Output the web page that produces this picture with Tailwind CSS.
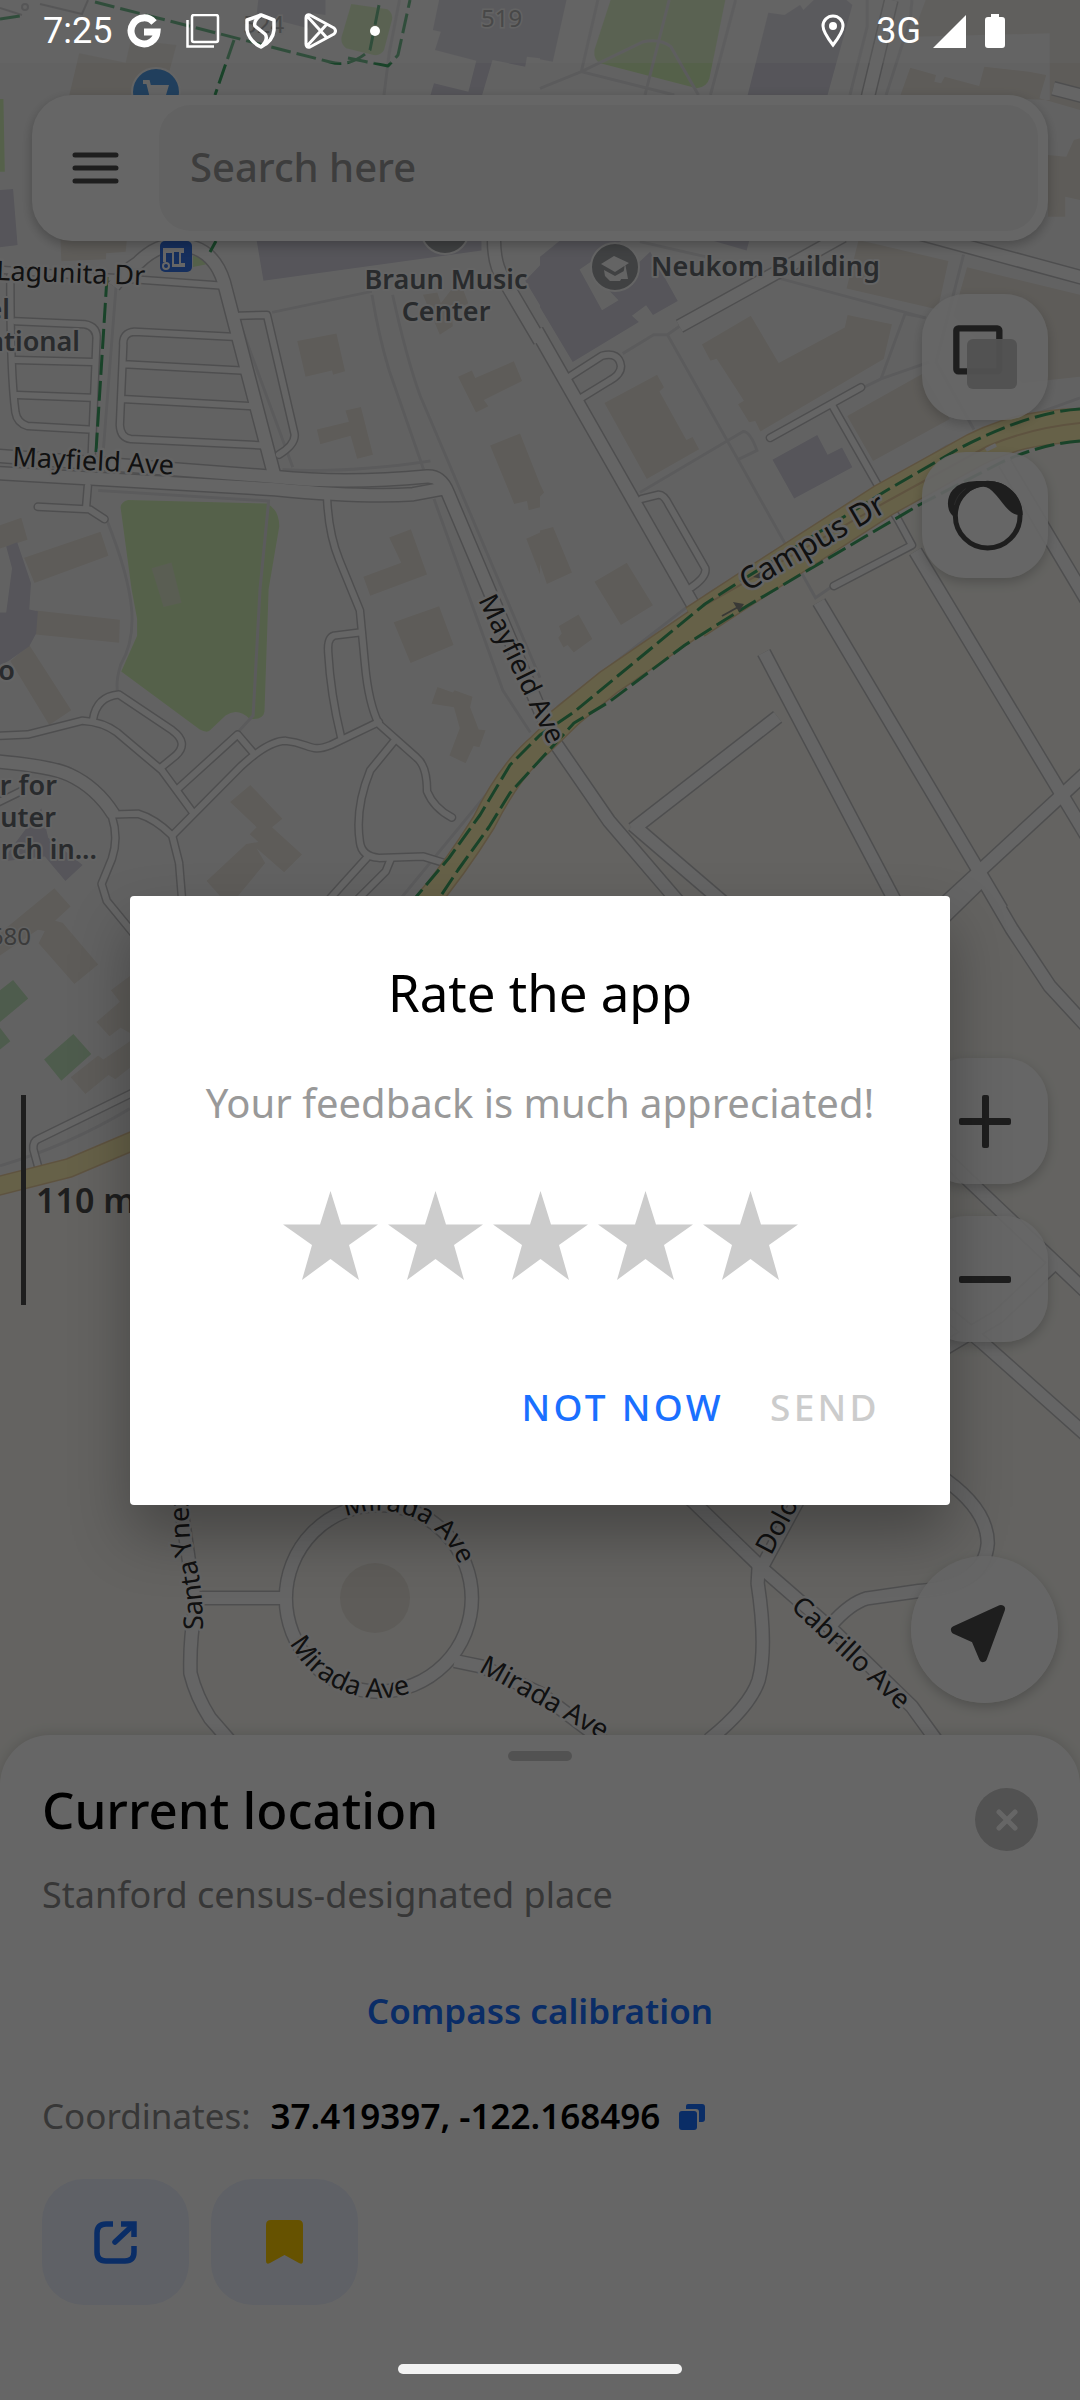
<!DOCTYPE html>
<html lang="en">
<head>
<meta charset="utf-8">
<meta name="viewport" content="width=device-width, initial-scale=1">
<title>Map</title>
<script src="https://cdn.jsdelivr.net/npm/@tailwindcss/browser@4"></script>
</head>
<body class="relative flex min-h-screen flex-col overflow-x-hidden bg-[#f9f8f2] font-['Noto_Sans',sans-serif] text-black">

<!-- Map -->
<svg class="absolute inset-0 h-full w-full [&_path]:[vector-effect:non-scaling-stroke]" viewBox="0 0 1080 2400" preserveAspectRatio="xMidYMin slice" aria-label="Map">
  <defs>
    <g id="wide" fill="none" stroke-linejoin="round">
      <g transform="translate(0 240) scale(.3444 .4209)">
        <path d="M330 110Q360 75 400 55Q460 5 530 12Q620 20 650 100L800 570"/>
        <path d="M-20 512L800 563Q1000 580 1240 562Q1280 560 1300 600L1600 1180"/>
        <path d="M-20 553L800 592Q1050 612 1200 604L1290 590"/>
        <path d="M1435 -20Q1430 50 1460 90L1568 240"/>
        <path d="M-20 1238Q150 1250 200 1270Q280 1300 330 1365"/>
      </g>
      <g transform="translate(540 240) scale(.3444 .4209)">
        <path d="M-10 215L450 875"/><path d="M405 205L880 -10"/>
        <path d="M810 860L1340 1590"/><path d="M650 980L1050 1600"/>
        <path d="M1090 740L1620 1460"/><path d="M1350 530L1620 900"/>
        <path d="M690 1133L270 1400"/><path d="M1600 1255L1130 1610"/>
        <path d="M40 1190L200 1380L420 1590"/><path d="M270 1390L570 1600"/>
      </g>
      <g transform="translate(540 0) scale(.3444 .3333)">
        <path d="M1020 0L950 300"/><path d="M1100 700L1600 840"/><path d="M1490 265L1620 300"/>
      </g>
      <g transform="translate(540 880) scale(.3444 .4082)">
        <path d="M1280 -10L1370 120L1480 260L1600 370"/><path d="M1290 -5L1150 110"/>
        <path d="M1150 660L1500 940L1600 1020"/><path d="M1500 935L1330 1070L1150 1160"/>
        <path d="M1150 1040L1280 1130L1600 1370"/>
      </g>
      <g transform="translate(0 1480) scale(.3444 .3333)">
        <path d="M1100 75A270 280 0 0 1 1100 635A270 280 0 0 1 1100 75Z"/>
        <path d="M570 354H830"/><path d="M520 40L568 380Q550 480 553 580Q570 650 610 715L665 780"/>
        <path d="M1320 543L1400 560L1568 640L1760 790"/>
      </g>
      <g transform="translate(540 1480) scale(.3444 .3333)">
        <path d="M1150 -20Q1300 80 1300 190Q1290 320 1100 333L950 355Q900 370 845 435"/>
        <path d="M420 40L650 270L850 450L1080 680L1150 780"/>
        <path d="M635 255L632 310Q660 500 635 600Q610 680 490 780"/><path d="M640 270L760 40"/>
      </g>
    </g>
    <g id="narrow" fill="none" stroke-linejoin="round" stroke-linecap="round">
      <g transform="translate(0 240) scale(.3444 .4209)">
        <path d="M30 85C30 300 40 380 45 410Q50 435 80 442L258 450"/>
        <path d="M45 193L245 200Q285 205 280 240L265 535"/>
        <path d="M45 285L270 290M50 368L265 375M-10 70L640 108"/>
        <path d="M675 230L390 218Q355 220 358 250L348 440Q350 470 380 473L765 488M360 295L700 310M355 378L735 395"/>
        <path d="M695 180L775 178L855 460Q860 485 810 510"/>
        <path d="M255 585L250 635M110 634L260 640L303 663"/>
        <path d="M950 618Q955 700 985 760L1045 880L1060 1010Q1070 1100 1100 1150L1210 1230Q1240 1250 1240 1310Q1260 1350 1312 1372"/>
        <path d="M1050 932L970 940Q950 945 953 980Q960 1080 990 1180"/>
        <path d="M-10 1178L80 1175L240 1142Q300 1145 340 1170L470 1260L560 1360"/>
        <path d="M270 1140Q280 1085 345 1080L500 1165Q550 1195 510 1225L465 1255"/>
        <path d="M515 1305L690 1175L735 1218"/>
        <path d="M500 1415L700 1250Q780 1190 830 1190C900 1195 900 1220 960 1200L1100 1145"/>
        <path d="M1145 1190L1075 1260Q1030 1350 1045 1430Q1050 1465 1100 1468L1230 1465L1290 1480"/>
        <path d="M930 1590L1065 1468M1010 1590L1120 1500L1135 1470"/>
        <path d="M330 1365L400 1363Q450 1375 500 1415L520 1480L530 1580"/>
        <path d="M325 1370Q345 1420 325 1470L295 1530L310 1570L390 1650"/>
        <path d="M-10 1338L60 1310"/>
      </g>
      <g transform="translate(540 240) scale(.3444 .4209)">
        <path d="M85 325L180 275Q230 265 235 300Q235 320 200 335L120 375"/>
        <path d="M295 615L345 605Q360 605 375 630L480 780Q485 800 440 825"/>
        <path d="M668 470L932 350M850 395L1000 610L1040 665L1080 725L853 822"/>
      </g>
      <g transform="translate(0 880) scale(.3444 .4082)"><path d="M400 515L110 635Q95 640 97 660L110 700"/></g>
    </g>
    <path id="mirada-top" d="M346 1517A87 87 0 0 1 466 1598"/>
    <path id="mirada-bottom" d="M290 1643A100 100 0 0 0 470 1640"/>
    <path id="santa" d="M203 1630C203 1590 198 1565 191 1545Q188 1530 188 1440"/>
  </defs>

  <path fill="#f6f6f6" d="M0 0H1080V425C990 425 930 480 884 501L609 690L540 750L475 838L430 897L130 1139L0 1186Z"/>

  <!-- Parks -->
  <g fill="#d5f3b9">
    <path transform="translate(0 240) scale(.3444 .4209)" d="M372 618L775 626Q810 640 811 680L780 830L768 1120Q765 1140 725 1138Q690 1110 655 1130L610 1165Q600 1172 580 1163L352 1025L398 940V900L382 830L350 635Q352 622 372 618Z"/>
    <path transform="translate(540 0) scale(.3444 .3333)" d="M205 0H538L492 235Q485 262 455 265L175 190Q155 180 158 150Z"/>
    <path transform="scale(.3444 .3333)" d="M1020 12L1125 28Q1142 40 1138 60L1115 150Q1105 168 1085 165L1005 145Q988 130 992 110ZM0 297H10L14 515H0Z"/>
    <path d="M193 256Q208 258 208 264L193 267Z"/>
  </g>
  <g fill="#c4e6c0" transform="translate(0 880) scale(.3444 .4082)">
    <path d="M38 245L82 290L0 348V270ZM0 362L30 395L0 415ZM213 377L265 426L178 492L128 440Z"/>
  </g>

  <!-- Buildings -->
  <g fill="#ebe6de">
    <path transform="scale(.3444 .3333)" d="M230 160L365 188L380 120L512 135L480 260V290H200ZM175 700H370L365 755L308 760V778L178 784Z"/>
    <path transform="translate(0 240) scale(.3444 .4209)" d="M863 240L977 222L1002 312L967 320L964 310L887 325ZM920 450L1013 432L1003 405L1048 397L1083 510L1037 520L1018 465L930 485ZM1228 130L1270 125L1280 150L1310 118L1345 118L1360 150L1310 170L1315 205L1277 225ZM1330 325L1370 310L1380 328L1492 288L1516 335L1405 380L1418 395L1382 410ZM1423 488L1510 460L1568 580V635L1535 642L1530 620L1493 627ZM1130 707L1193 687L1240 795L1075 845L1055 800L1165 767ZM1143 908L1275 870L1317 962L1192 1005ZM1270 1062L1315 1075L1320 1070L1372 1085L1365 1110L1390 1163L1410 1165L1392 1205L1375 1202L1352 1243L1305 1225L1335 1160L1318 1110L1253 1102ZM0 678L62 660L80 712L0 733ZM70 755L292 693L315 750L100 815ZM105 880L348 902L346 957L103 937ZM85 962L207 1117L143 1152L30 1000ZM727 1295L820 1375L790 1395L877 1460L825 1502L745 1445L770 1480L690 1560H640L600 1523L715 1435L750 1430L725 1412L745 1395L668 1335ZM1528 710L1568 695V795Z"/>
    <path transform="translate(540 240) scale(.3444 .4209)" d="M470 248L612 180L693 292L885 208L893 178L1022 200L998 283L640 455L625 430L607 433L575 390L592 382L513 282L495 287ZM187 387L340 320L360 350L347 360L425 475L443 468L462 497L310 568ZM892 418L1112 317L1190 425L967 525ZM925 0L1186 50L1155 165L890 115ZM1240 65L1568 130V325L1400 340L1200 180ZM0 690L38 682L93 790L20 817L0 770ZM158 812L252 767L328 868L235 915ZM55 917L112 890L152 948L98 980L80 962L68 968L53 945L63 935ZM0 580L12 600L0 610Z"/>
    <path transform="translate(540 0) scale(.3444 .3333)" d="M1120 0H1568V600L1525 590V650L1475 650L1475 465L1528 470L1550 420L1568 415V330L1450 295L1470 225L1420 215L1290 200L1275 258L1175 230L1165 250L1145 245L1150 225L1075 203L1045 290H1200L1480 300V100L1080 110Z"/>
    <path transform="translate(0 880) scale(.3444 .4082)" d="M158 20L205 65L160 100L182 105L285 207L216 255L112 155L130 125L110 122L0 185V130ZM377 235L322 270L348 298L280 348L318 383L350 362L377 375ZM377 395L300 440L285 430L205 483L248 524L315 478L335 488L377 460ZM600 0H720L670 38H645Z"/>
    <ellipse cx="375" cy="1598" rx="35" ry="35"/>
    <path fill="#e0eccf" transform="translate(0 240) scale(.3444 .4209)" d="M440 780L498 766L527 862L475 872Z"/>
  </g>
  <g fill="#d6d4e0">
    <path transform="translate(0 240) scale(.3444 .4209)" d="M745 0H1398V25L765 97ZM18 728L50 718L90 815L85 878L110 882L105 935L85 965L25 1000L0 1010V885H18L35 780ZM1568 60L1525 97L1568 155ZM10 1470L120 1350L140 1420L240 1485L190 1523L130 1465L25 1475ZM0 0H45L50 12L0 14Z"/>
    <path transform="translate(540 240) scale(.3444 .4209)" d="M0 40L60 0H240L115 70L180 167L228 143L200 120L320 28L400 145L328 178L308 155L267 180L287 195L95 290L0 160ZM675 522L805 463L835 510L877 493L907 540L738 614ZM495 0H608L600 25Z"/>
    <path transform="scale(.3444 .3333)" d="M750 0H945V45L910 40L895 85L745 45ZM1275 0H1568V175L1530 170L1525 200L1430 180L1400 285H1250L1260 250L1360 275L1383 182L1263 150L1280 95L1257 90ZM0 570L38 567L51 735L0 742Z"/>
    <path transform="translate(540 0) scale(.3444 .3333)" d="M0 0H77L37 185L0 178ZM663 38L710 45L755 15L765 30L795 0H890L907 15L835 285H603Z"/>
  </g>

  <!-- Footpaths -->
  <g fill="none" stroke="#e4e4e6" stroke-width="3">
    <path transform="translate(0 240) scale(.3444 .4209)" d="M337 110L300 500M790 172L1080 122M1080 130Q1100 230 1130 310L1230 545M1140 130Q1180 280 1220 370L1568 1040M700 205L850 540M820 545Q1000 555 1250 525M285 595L780 620L755 830L735 1130L690 1170M310 665C400 850 400 940 350 1010Q335 1050 342 1078M1260 615L1460 1070L1540 1170M1160 1568L1560 1170"/>
    <path transform="translate(540 240) scale(.3444 .4209)" d="M240 270L330 225H370L405 205M370 225L575 522L800 850L850 822M290 600L590 455Q610 455 630 500L575 522M690 90L1120 185L1060 175L990 330L940 350M990 330L1130 290M1230 35L1150 290L1260 450M480 845L700 735L1180 490L1568 375M50 1110L430 870"/>
    <path transform="translate(540 0) scale(.3444 .3333)" d="M375 0L305 285M0 265L120 215L300 125Q350 115 380 140L460 285M168 0L120 215L390 285M568 0L495 285M950 0L950 80L900 285M1080 0L1075 60L1005 285M290 725L480 770"/>
    <path transform="scale(.3444 .3333)" d="M1160 0L1130 160L1115 285"/>
    <path transform="translate(0 880) scale(.3444 .4082)" d="M0 700Q200 650 377 560"/>
  </g>
  <g fill="none" stroke="#c8c8ca" stroke-width="2"><path d="M0 8L22 15M40 4L82 14L88 0"/><circle cx="25" cy="7" r="3"/></g>

  <!-- Roads: casing, then surface -->
  <use href="#narrow" stroke="#c4c4c6" stroke-width="9"/>
  <use href="#wide" stroke="#c4c4c6" stroke-width="15"/>
  <use href="#narrow" stroke="#fdfdfd" stroke-width="6"/>
  <use href="#wide" stroke="#fdfdfd" stroke-width="12"/>

  <g fill="none" stroke-linejoin="round">
    <g stroke="#ecd0a0">
      <path stroke-width="35" d="M1090 425C1040 425 1000 434 960 458L884 500L747 588L695 622"/>
      <path stroke-width="28" d="M720 606L609 682L557 724"/>
      <path stroke-width="25" d="M580 706L540 745Q510 770 484 822Q454 870 424 905"/>
      <path stroke-width="20" d="M-10 1188L69 1168L135 1140"/>
    </g>
    <g stroke="#fff3b4">
      <path stroke-width="32" d="M1090 425C1040 425 1000 434 960 458L884 500L747 588L695 622"/>
      <path stroke-width="25" d="M720 606L609 682L557 724"/>
      <path stroke-width="22" d="M580 706L540 745Q510 770 484 822Q454 870 424 905"/>
      <path stroke-width="17" d="M-10 1188L69 1168L135 1140"/>
    </g>
    <path stroke="#ecd0a0" stroke-width="2" d="M1080 423Q1030 428 988 446L884 503L700 608"/>
    <path stroke="#fdfdfd" stroke-width="4" d="M986 450L996 445"/>
    <g stroke="#3fa766" stroke-width="3" stroke-dasharray="20 6">
      <path d="M1080 409Q1030 412 960 448L884 492L747 577L705 604L574 712L540 735L510 765L480 815L449 858L416 897"/>
      <path d="M1080 441Q1040 444 1000 463L919 505L747 606L685 645L609 702L574 723L540 760L510 793L489 827L458 870L440 897"/>
      <path d="M95 2L330 62Q350 68 370 50L380 0M348 58L388 66L398 55L410 0M234 40L215 95M216 241L210 252M107 277L96 452M0 19L20 16"/>
    </g>
    <path stroke="#8f9088" stroke-width="2" d="M722 616L740 606"/>
    <path fill="#8f9088" stroke="none" d="M733 602L744 604L739 612ZM753 577L762 571L762 579Z"/>
  </g>

  <!-- Places -->
  <g stroke="#fafafa" stroke-width="2">
    <circle cx="156" cy="92" r="24" fill="#549fe8"/>
    <circle cx="445" cy="230" r="24" fill="#a0a3a6"/>
    <circle cx="615" cy="267" r="24" fill="#a0a3a6"/>
  </g>
  <path fill="none" stroke="#fafafa" stroke-width="4" d="M143 82H148L152 98H167"/><path fill="#fafafa" d="M149 85H169L166 95H151Z"/>
  <path fill="#fafafa" d="M601 264L614 256L629 263L615 272ZM604 270L615 276L624 271V274L620 281H610L605 276ZM625 263L628 279H621L624 270Z"/>
  <rect x="160" y="241" width="32" height="31" rx="5" fill="#3775e8"/>
  <path fill="#fff" d="M163 248H184V253H181V263H185V267H172V253H166V262H163Z"/>
  <path fill="#3775e8" d="M174 252H179V264H174Z"/><circle cx="166" cy="266" r="3" fill="#3775e8" stroke="#fff" stroke-width="2"/>

  <!-- Labels -->
  <g class="font-semibold" font-size="27" fill="#666b70" stroke="#fafafa" stroke-width="4" stroke-linejoin="round" paint-order="stroke">
    <text x="446" y="289" text-anchor="middle">Braun Music</text>
    <text x="446" y="321" text-anchor="middle">Center</text>
    <text x="651" y="276">Neukom Building</text>
    <text x="10" y="319" text-anchor="end">el</text>
    <text x="80" y="351" text-anchor="end">ational</text>
    <text x="15" y="680" text-anchor="end">o</text>
    <text x="57" y="795" text-anchor="end">r for</text>
    <text x="56" y="827" text-anchor="end">uter</text>
    <text x="97" y="859" text-anchor="end">rch in...</text>
  </g>
  <g font-size="24" fill="#949494" stroke="#f4f4f4" stroke-width="3" paint-order="stroke">
    <text x="481" y="27">519</text>
    <text x="243" y="33">524</text>
    <text x="31" y="945" text-anchor="end">680</text>
  </g>
  <g font-size="27" fill="#2b2b2b" stroke="#fafafa" stroke-width="5" stroke-linejoin="round" paint-order="stroke">
    <text transform="translate(-4 280) rotate(2)">Lagunita Dr</text>
    <text transform="translate(12 466) rotate(3)">Mayfield Ave</text>
    <text transform="translate(478 600) rotate(64)">Mayfield Ave</text>
    <text font-size="31" transform="translate(747 592) rotate(-30)">Campus Dr</text>
    <text transform="translate(478 1671) rotate(29)">Mirada Ave</text>
    <text transform="translate(771 1556) rotate(-62)">Dolores St</text>
    <text transform="translate(790 1608) rotate(43)">Cabrillo Ave</text>
    <text font-size="26"><textPath href="#mirada-top">Mirada Ave</textPath></text>
    <text><textPath href="#mirada-bottom">Mirada Ave</textPath></text>
    <text><textPath href="#santa">Santa Ynez St</textPath></text>
  </g>
</svg>

<!-- Screen content -->
<div class="relative h-[63px] bg-white/30"></div>
<header class="relative mx-8 mt-8 flex items-center rounded-[40px] bg-white p-[10px] shadow-[0_4px_12px_rgba(0,0,0,0.25)]">
  <button class="flex w-[117px] justify-center pr-[10px]" aria-label="Menu">
    <svg width="47" height="32" viewBox="0 0 47 32" fill="none" stroke="#4d4d4d" stroke-width="5" stroke-linecap="round"><path d="M3 3H44M3 16H44M3 29H44"/></svg>
  </button>
  <input type="search" aria-label="Search here" placeholder="Search here" class="h-[126px] min-w-0 flex-1 rounded-[32px] bg-[#f5f5f5] px-[31px] pb-[3px] text-[40px] font-medium placeholder:text-[#999]">
</header>

<main class="relative mt-[53px] flex flex-1 flex-col">
  <div class="mr-8 flex flex-col items-end gap-8">
    <button class="rounded-[44px] bg-white/90 shadow-[0_4px_12px_rgba(0,0,0,0.2)]" aria-label="Map layers">
      <svg width="126" height="126" viewBox="6 42 378 378"><rect x="109" y="145" width="129" height="129" rx="6" fill="none" stroke="#4d4d4d" stroke-width="19"/><rect x="141" y="177" width="150" height="150" rx="18" fill="#cbcbcb" fill-opacity=".96"/></svg>
    </button>
    <button class="rounded-[44px] bg-white/90 shadow-[0_4px_12px_rgba(0,0,0,0.2)]" aria-label="Street view">
      <svg width="126" height="126" viewBox="6 516 378 378"><circle cx="203" cy="707" r="97" fill="none" stroke="#4d4d4d" stroke-width="15"/><path fill="#4d4d4d" d="M98 707C78 690 80 650 98 630Q118 604 170 603H210C265 606 308 650 308 705L290 704C265 698 250 670 228 645Q208 620 190 620C150 622 118 655 114 690Z"/><path fill="none" stroke="#a0a0a0" stroke-width="1" d="M103 675Q110 645 137 626"/></svg>
    </button>
  </div>
  <div class="flex-[480]"></div>
  <div class="mr-8 ml-[21px] flex items-center justify-between">
    <div class="flex items-center gap-[10px] text-[34px] font-semibold text-[#4d4d4d]">
      <div class="h-[210px] w-[5px] bg-[#4d4d4d]"></div>
      <span>110 m</span>
    </div>
    <div class="flex flex-col gap-8">
      <button class="rounded-[44px] bg-white/90 shadow-[0_4px_12px_rgba(0,0,0,0.2)]" aria-label="Zoom in">
        <svg width="126" height="126" viewBox="0 0 126 126" fill="#4d4d4d"><rect x="37" y="60" width="52" height="7" rx="2"/><rect x="60" y="37" width="7" height="53" rx="2"/></svg>
      </button>
      <button class="rounded-[44px] bg-white/90 shadow-[0_4px_12px_rgba(0,0,0,0.2)]" aria-label="Zoom out">
        <svg width="126" height="126" viewBox="0 0 126 126" fill="#4d4d4d"><rect x="37" y="60" width="52" height="7" rx="2"/></svg>
      </button>
    </div>
  </div>
  <div class="flex-[214]"></div>
  <div class="mr-[22px] mb-8 flex justify-end">
    <button class="rounded-full bg-white/95 shadow-[0_4px_12px_rgba(0,0,0,0.2)]" aria-label="My location">
      <svg width="147" height="147" viewBox="0 0 147 147"><path d="M90 53L44 74L64 83L72 102Z" fill="#4d4d4d" stroke="#4d4d4d" stroke-width="8" stroke-linejoin="round"/></svg>
    </button>
  </div>
</main>

<section class="relative rounded-t-[50px] bg-white px-[42px] pt-4 pb-[95px] shadow-[0_-2px_12px_rgba(0,0,0,0.12)]">
  <div class="mx-auto h-[10px] w-16 rounded-full bg-[#cdcdcd]"></div>
  <div class="mt-[6px] flex items-center justify-between">
    <h1 class="text-[51px] leading-[68px] font-medium">Current location</h1>
    <button class="mt-[21px] flex size-[63px] items-center justify-center rounded-full bg-[#cdcdcd]" aria-label="Close">
      <svg width="22" height="22" viewBox="0 0 22 22" stroke="#fff" stroke-width="5" stroke-linecap="round"><path d="M3 3L19 19M19 3L3 19"/></svg>
    </button>
  </div>
  <p class="mt-5 text-[36px] leading-[48px] text-[#8a8a8a]">Stanford census-designated place</p>
  <a href="#calibration" class="mx-auto mt-[68px] block w-fit text-[35px] leading-[48px] font-semibold text-[#1a70ff]">Compass calibration</a>
  <div class="mt-[57px] flex items-center text-[35px] leading-[48px]">
    <span class="text-[#8a8a8a]">Coordinates:</span>
    <span class="ml-5 font-semibold">37.419397, -122.168496</span>
    <button class="ml-[18px]" aria-label="Copy coordinates">
      <svg width="27" height="27" viewBox="0 0 27 27" fill="#1a70ff"><rect x="1" y="8" width="18" height="19" rx="3"/><path d="M8 6V3Q8 1 10 1H24Q27 1 27 4V16Q27 19 24 19H21V9Q21 6 18 6Z"/></svg>
    </button>
  </div>
  <div class="mt-[39px] flex gap-[22px]">
    <button class="flex h-[126px] w-[147px] items-center justify-center rounded-[42px] bg-[#edf2ff]" aria-label="Share">
      <svg width="43" height="43" viewBox="0 0 43 43" fill="none" stroke="#1a70ff" stroke-width="5.500"><path d="M19 3H12Q3 3 3 12V31Q3 40 12 40H31Q40 40 40 31V25"/><path stroke-linecap="round" d="M21 21L37 6"/><path d="M27 3H40V16"/></svg>
    </button>
    <button class="flex h-[126px] w-[147px] items-center justify-center rounded-[42px] bg-[#edf2ff]" aria-label="Bookmark">
      <svg width="37" height="44" viewBox="0 0 37 44" fill="#ffcc00"><path d="M5 0H32Q37 0 37 5V41Q37 45 33 43L18.500 35L4 43Q0 45 0 41V5Q0 0 5 0Z"/></svg>
    </button>
  </div>
</section>

<!-- Rating dialog over the dimmed screen -->
<div class="absolute inset-0 flex items-center justify-center bg-black/60 px-[130px]">
  <form role="dialog" aria-labelledby="rate-title" class="flex w-full flex-col items-center rounded-[4px] bg-white px-[60px] pt-[62px] pb-[74px] shadow-[0_30px_60px_rgba(0,0,0,0.3)]">
    <h2 id="rate-title" class="text-[51px] leading-[68px]">Rate the app</h2>
    <p class="mt-[49px] text-[40px] leading-[56px] whitespace-nowrap text-[#999]">Your feedback is much appreciated!</p>
    <fieldset class="mt-[60px] flex gap-[10px]" aria-label="Rating">
      <label><input type="radio" name="rating" value="1" aria-label="1 star" class="sr-only"><svg width="95" height="89" viewBox="0 0 95 89" fill="#ccc"><path d="M47.500 0L58 33.500H95L66 54L76 89L47.500 68L19 89L29 54L0 33.500H37Z"/></svg></label>
      <label><input type="radio" name="rating" value="2" aria-label="2 stars" class="sr-only"><svg width="95" height="89" viewBox="0 0 95 89" fill="#ccc"><path d="M47.500 0L58 33.500H95L66 54L76 89L47.500 68L19 89L29 54L0 33.500H37Z"/></svg></label>
      <label><input type="radio" name="rating" value="3" aria-label="3 stars" class="sr-only"><svg width="95" height="89" viewBox="0 0 95 89" fill="#ccc"><path d="M47.500 0L58 33.500H95L66 54L76 89L47.500 68L19 89L29 54L0 33.500H37Z"/></svg></label>
      <label><input type="radio" name="rating" value="4" aria-label="4 stars" class="sr-only"><svg width="95" height="89" viewBox="0 0 95 89" fill="#ccc"><path d="M47.500 0L58 33.500H95L66 54L76 89L47.500 68L19 89L29 54L0 33.500H37Z"/></svg></label>
      <label><input type="radio" name="rating" value="5" aria-label="5 stars" class="sr-only"><svg width="95" height="89" viewBox="0 0 95 89" fill="#ccc"><path d="M47.500 0L58 33.500H95L66 54L76 89L47.500 68L19 89L29 54L0 33.500H37Z"/></svg></label>
    </fieldset>
    <div class="mt-[103px] flex gap-[46px] self-end pr-[10px] text-[37px] leading-[48px] font-medium tracking-[0.09em]">
      <button type="button" class="text-[#1a70ff]">NOT NOW</button>
      <button type="submit" disabled class="text-[#ccc]">SEND</button>
    </div>
  </form>
</div>

<!-- System bars -->
<div class="absolute inset-x-0 top-0 flex h-[62px] items-center justify-between pr-[75px] pl-[43px] font-['Roboto',sans-serif] text-[36px] leading-[48px] text-white">
  <div class="flex items-center gap-[25px]">
    <div class="flex items-center gap-[15px]">
      <span>7:25</span>
      <svg width="34" height="34" viewBox="0 0 34 34" fill="none" stroke="#fff" stroke-width="7"><path d="M27 8.500A13 13 0 1 0 30 18H17"/></svg>
    </div>
    <svg width="34" height="34" viewBox="0 0 34 34" fill="none" stroke="#fff" stroke-width="2.500"><rect x="6" y="1" width="26" height="27" rx="2"/><path d="M1.500 6V32.500H28"/></svg>
    <svg width="34" height="36" viewBox="0 0 34 36" fill="none" stroke="#fff" stroke-width="3.500" stroke-linejoin="round"><path d="M16 2L29 7V17Q28 28 16 34Q4 28 2 17V7Z"/><path d="M16 2Q8 8 10 13L20 21Q24 26 16 34"/></svg>
    <svg width="34" height="36" viewBox="0 0 34 36" fill="none" stroke="#fff" stroke-width="3" stroke-linejoin="round"><path d="M6 2L30 15Q33 18 30 21L6 34Q2 35 2 31V5Q2 1 6 2ZM3 3L23 25M3 33L23 11"/></svg>
    <svg width="34" height="12" viewBox="0 0 34 12" fill="#fff"><circle cx="12" cy="6" r="5"/></svg>
  </div>
  <div class="flex items-center">
    <svg class="mr-[31px]" width="24" height="34" viewBox="0 0 24 34" fill="none" stroke="#fff" stroke-width="3"><path d="M12 31Q2 18 2 12A10 10 0 0 1 22 12Q22 18 12 31Z"/><circle cx="12" cy="12" r="4" fill="#fff" stroke="none"/></svg>
    <span class="mr-3">3G</span>
    <svg class="mr-[19px]" width="33" height="33" viewBox="0 0 33 33" fill="#fff"><path d="M33 0V33H0Z"/></svg>
    <svg width="20" height="34" viewBox="0 0 20 34" fill="#fff"><path d="M6 0H14V3H17Q20 3 20 6V31Q20 34 17 34H3Q0 34 0 31V6Q0 3 3 3H6Z"/></svg>
  </div>
</div>
<div class="absolute inset-x-0 bottom-[26px] mx-auto h-[10px] w-[284px] rounded-full bg-[#f2f2f2]"></div>
</body>
</html>
